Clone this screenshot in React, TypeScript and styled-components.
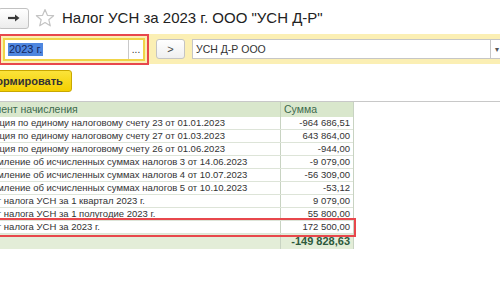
import { createGlobalStyle } from "styled-components";
import styled from "styled-components";

const rows = [
  { doc: "Операция по единому налоговому счету 23 от 01.01.2023", sum: "-964 686,51" },
  { doc: "Операция по единому налоговому счету 27 от 01.03.2023", sum: "643 864,00" },
  { doc: "Операция по единому налоговому счету 26 от 01.06.2023", sum: "-944,00" },
  { doc: "Уведомление об исчисленных суммах налогов 3 от 14.06.2023", sum: "-9 079,00" },
  { doc: "Уведомление об исчисленных суммах налогов 4 от 10.07.2023", sum: "-56 309,00" },
  { doc: "Уведомление об исчисленных суммах налогов 5 от 10.10.2023", sum: "-53,12" },
  { doc: "Расчет налога УСН за 1 квартал 2023 г.", sum: "9 079,00" },
  { doc: "Расчет налога УСН за 1 полугодие 2023 г.", sum: "55 800,00" },
  { doc: "Расчет налога УСН за 2023 г.", sum: "172 500,00", marked: true },
];

const App = () => {
  return (
    <>
      <GlobalStyle />
      <Viewport>
        <Canvas>
          <TitleRow>
            <NavGroup>
              <NavButton>
                <svg width="14" height="10" viewBox="0 0 14 10">
                  <path d="M13 5H3M6 1L2 5l4 4" stroke="#c8c8c8" strokeWidth="2" fill="none" />
                </svg>
              </NavButton>
              <NavButton>
                <svg width="14" height="10" viewBox="0 0 14 10">
                  <path d="M1 5h9" stroke="#3a3a3a" strokeWidth="2.2" fill="none" />
                  <path d="M8 1.5L12.5 5 8 8.5z" fill="#3a3a3a" />
                </svg>
              </NavButton>
            </NavGroup>
            <Star width="20" height="20" viewBox="0 0 20 20">
              <polygon
                points="10,1.5 12.4,7.3 18.6,7.7 13.8,11.7 15.3,17.8 10,14.5 4.7,17.8 6.2,11.7 1.4,7.7 7.6,7.3"
                fill="none"
                stroke="#c4c4c4"
                strokeWidth="1.2"
                strokeLinejoin="round"
              />
            </Star>
            <Title>Налог УСН за 2023 г. ООО "УСН Д-Р"</Title>
          </TitleRow>

          <FilterBand>
            <PeriodField>
              <SelectedText>2023 г.</SelectedText>
              <ChoiceButton>...</ChoiceButton>
            </PeriodField>
            <SmallButton>&gt;</SmallButton>
            <OrgField>
              <span>УСН Д-Р ООО</span>
              <DropButton>▾</DropButton>
            </OrgField>
          </FilterBand>

          <CommandBar>
            <MainButton>Сформировать</MainButton>
          </CommandBar>

          <TableArea>
            <Table>
              <HeadRow>
                <HeadCell>Документ начисления</HeadCell>
                <HeadCell>Сумма</HeadCell>
              </HeadRow>
              {rows.map((r) => (
                <Row key={r.doc} $marked={!!r.marked}>
                  <Cell>{r.doc}</Cell>
                  <Cell $right>{r.sum}</Cell>
                </Row>
              ))}
              <FootRow>
                <FootCell />
                <FootCell $right>-149 828,63</FootCell>
              </FootRow>
            </Table>
          </TableArea>
        </Canvas>
      </Viewport>
    </>
  );
};

export default App;

const GlobalStyle = createGlobalStyle`
  html, body {
    margin: 0;
    padding: 0;
    background: #fff;
  }
  body {
    font-family: "Liberation Sans", Arial, sans-serif;
    color: #333;
  }
`;

const Viewport = styled.div`
  width: 500px;
  height: 300px;
  overflow: hidden;
  background: #fff;
`;

// форма прокручена влево, поэтому левая часть обрезана
const Canvas = styled.div`
  width: 560px;
  margin-left: -37px;
`;

const TitleRow = styled.div`
  height: 34px;
  display: flex;
  align-items: center;
  padding-left: 3px;
`;

const NavGroup = styled.div`
  display: flex;
  gap: 1px;
  margin-top: 2px;
`;

const NavButton = styled.div`
  width: 29px;
  height: 19px;
  border: 1px solid #c2c2c2;
  border-radius: 3px;
  background: linear-gradient(#ffffff, #ececec);
  display: flex;
  align-items: center;
  justify-content: center;
`;

const Star = styled.svg`
  margin-left: 6px;
  margin-top: 1px;
`;

const Title = styled.div`
  margin-left: 7px;
  font-size: 15px;
  color: #222;
  white-space: nowrap;
`;

const FilterBand = styled.div`
  height: 30px;
  background: #fbefb4;
  display: flex;
  align-items: center;
  padding-left: 40px;
`;

const PeriodField = styled.div`
  width: 138px;
  height: 19px;
  border: 2.5px solid #f0d448;
  background: #fff;
  display: flex;
  align-items: center;
  font-size: 11px;
  outline: 2px solid #e8474c;
  outline-offset: 2.5px;
`;

const SelectedText = styled.span`
  margin-left: 3px;
  background: #4f87e0;
  color: #14265e;
  line-height: 13px;
  padding: 0 1px;
  white-space: nowrap;
`;

const ChoiceButton = styled.div`
  margin-left: auto;
  width: 15px;
  height: 100%;
  border-left: 1px solid #c9c9c9;
  font-size: 10px;
  color: #333;
  display: flex;
  align-items: flex-end;
  justify-content: center;
  padding-bottom: 4px;
  box-sizing: border-box;
`;

const SmallButton = styled.div`
  margin-left: 11px;
  width: 27px;
  height: 18px;
  border: 1px solid #c4c4c4;
  border-radius: 3px;
  background: linear-gradient(#ffffff, #efefef);
  font-size: 11px;
  color: #444;
  display: flex;
  align-items: center;
  justify-content: center;
`;

const OrgField = styled.div`
  box-sizing: border-box;
  margin-left: 7px;
  width: 321px;
  height: 20px;
  border: 1px solid #c6c6c6;
  background: #fff;
  display: flex;
  align-items: center;
  padding-left: 3px;
  font-size: 10.5px;
  color: #333;
`;

const DropButton = styled.div`
  margin-left: auto;
  width: 22px;
  height: 100%;
  border-left: 1px solid #c6c6c6;
  font-size: 8px;
  color: #555;
  display: flex;
  align-items: center;
  padding-left: 4px;
  box-sizing: border-box;
`;

const CommandBar = styled.div`
  display: flex;
  padding-top: 6px;
  padding-left: 7px;
`;

const MainButton = styled.div`
  height: 20px;
  padding: 0 8px;
  border: 1px solid #c9a800;
  border-radius: 3px;
  background: linear-gradient(#fbe33a, #f3cf00);
  font-size: 11px;
  font-weight: bold;
  color: #333;
  display: flex;
  align-items: center;
`;

const TableArea = styled.div`
  margin-top: 9px;
  border-top: 1px solid #c8c8c8;
`;

const Table = styled.div`
  width: 385px;
  margin-left: 5px;
  display: flex;
  flex-direction: column;
  border-right: 1px solid #c8d3c2;
`;

const HeadRow = styled.div`
  display: grid;
  grid-template-columns: 313px 72px;
  height: 15px;
  background: #d9e7cc;
`;

const HeadCell = styled.div`
  color: #3c6a4c;
  font-size: 10.5px;
  line-height: 15px;
  padding: 0 3px;
  border-right: 1px solid #c2d2b8;
  white-space: nowrap;
  overflow: hidden;
  &:last-child {
    border-right: none;
  }
`;

const Row = styled.div<{ $marked: boolean }>`
  display: grid;
  grid-template-columns: 313px 72px;
  height: 13px;
  box-sizing: border-box;
  border-bottom: 1px solid #dde4d8;
  outline: ${({ $marked }) => ($marked ? "2px solid #e8474c" : "none")};
  outline-offset: 1px;
  position: relative;
`;

const Cell = styled.div<{ $right?: boolean }>`
  line-height: 12px;
  font-size: 9.5px;
  color: #333;
  padding: 0 3px;
  border-right: 1px solid #c8d3c2;
  text-align: ${({ $right }) => ($right ? "right" : "left")};
  white-space: nowrap;
  overflow: hidden;
  &:last-child {
    border-right: none;
  }
`;

const FootRow = styled.div`
  display: grid;
  grid-template-columns: 313px 72px;
  height: 15px;
  background: #e3edd8;
`;

const FootCell = styled.div<{ $right?: boolean }>`
  line-height: 15px;
  color: #2d5a3c;
  font-size: 11px;
  font-weight: bold;
  padding: 0 3px;
  text-align: ${({ $right }) => ($right ? "right" : "left")};
  border-right: 1px solid #c8d3c2;
  &:last-child {
    border-right: none;
  }
`;
